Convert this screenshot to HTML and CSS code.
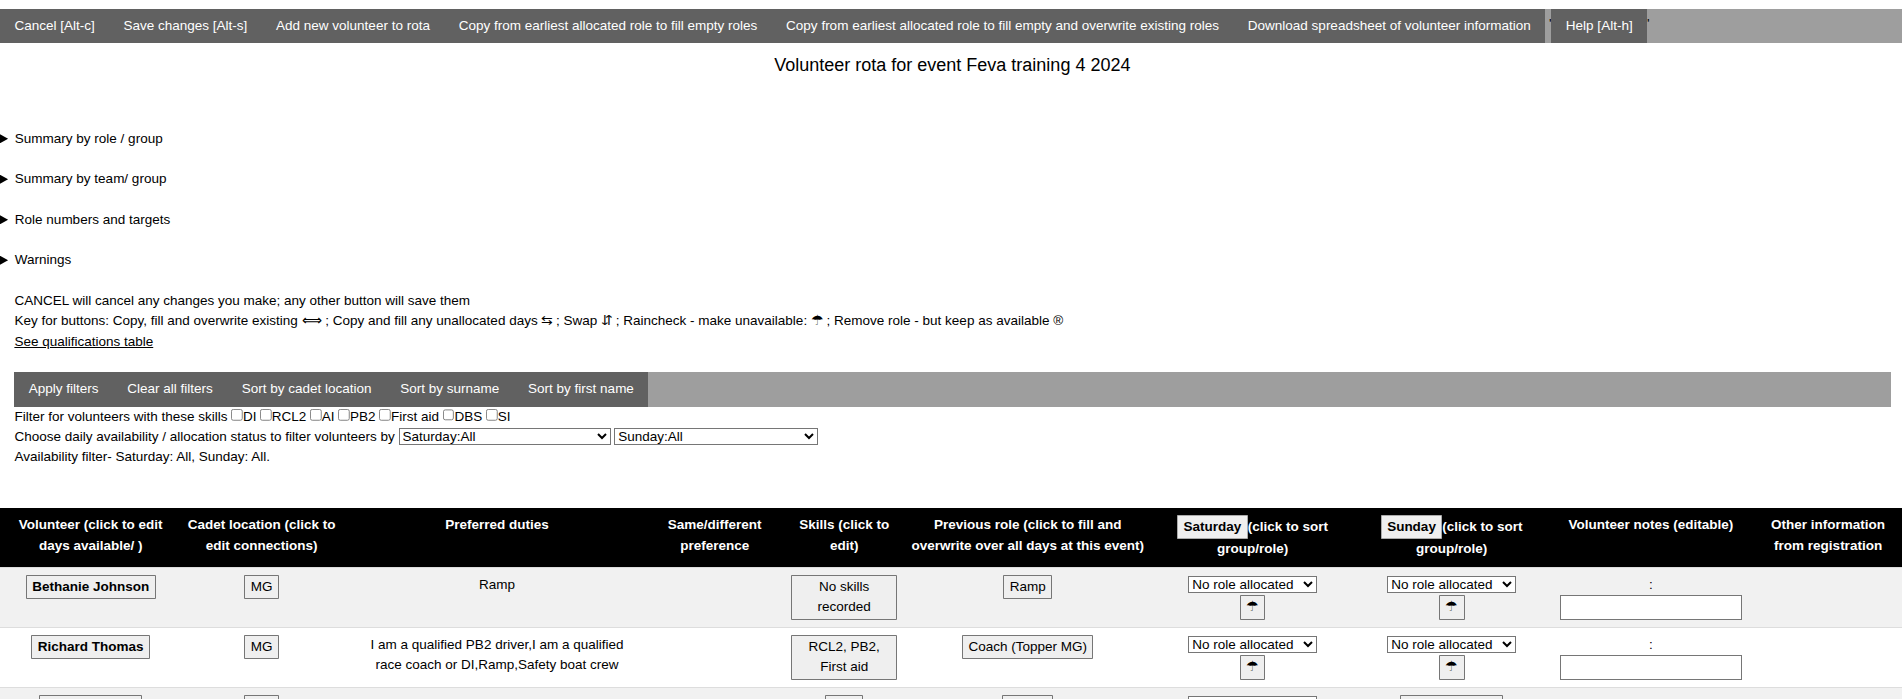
FILE: index.html
```html
<!DOCTYPE html>
<html lang="en">
<head>
<meta charset="utf-8">
<title>Volunteer rota</title>
<link rel="stylesheet" href="styles.css">
</head>
<body>
<form class="page">
<div class="bar top"><button type="button" class="bar-item">Cancel [Alt-c]</button><button type="button" class="bar-item">Save changes [Alt-s]</button><button type="button" class="bar-item">Add new volunteer to rota</button><button type="button" class="bar-item">Copy from earliest allocated role to fill empty roles</button><button type="button" class="bar-item">Copy from earliest allocated role to fill empty and overwrite existing roles</button><button type="button" class="bar-item">Download spreadsheet of volunteer information</button><span class="quote"> '</span><button type="button" class="bar-item">Help [Alt-h]</button><span class="quote">'</span></div>
<h4 class="title">Volunteer rota for event Feva training 4 2024</h4>
<div class="content">
<details><summary>Summary by role / group</summary></details>
<details><summary>Summary by team/ group</summary></details>
<details><summary>Role numbers and targets</summary></details>
<details><summary>Warnings</summary></details>
<div>CANCEL will cancel any changes you make; any other button will save them</div>
<div>Key for buttons: Copy, fill and overwrite existing ⟺ ; Copy and fill any unallocated days <span class="symbol">⇆</span> ; Swap <span class="symbol">⇵</span> ; Raincheck - make unavailable: <span class="symbol">☂</span> ; Remove role - but keep as available ®</div>
<div class="link-line"><a href="#">See qualifications table</a></div>
<div class="bar filters"><button type="button" class="bar-item">Apply filters</button><button type="button" class="bar-item">Clear all filters</button><button type="button" class="bar-item">Sort by cadet location</button><button type="button" class="bar-item">Sort by surname</button><button type="button" class="bar-item">Sort by first name</button></div>
<div>Filter for volunteers with these skills <input type="checkbox">DI <input type="checkbox">RCL2 <input type="checkbox">AI <input type="checkbox">PB2 <input type="checkbox">First aid <input type="checkbox">DBS <input type="checkbox">SI</div>
<div>Choose daily availability / allocation status to filter volunteers by <select class="sat-filter"><option>Saturday:All</option></select> <select class="sun-filter"><option>Sunday:All</option></select></div>
<div>Availability filter- Saturday: All, Sunday: All.</div>
</div>
<table class="rota">
<colgroup><col class="c-name"><col class="c-cadet"><col class="c-duties"><col class="c-same"><col class="c-skills"><col class="c-prev"><col class="c-sat"><col class="c-sun"><col class="c-notes"><col></colgroup>
<thead>
<tr><th>Volunteer (click to edit days available/ )</th><th>Cadet location (click to edit connections)</th><th>Preferred duties</th><th>Same/different preference</th><th>Skills (click to edit)</th><th>Previous role (click to fill and overwrite over all days at this event)</th><th><button type="button"><b>Saturday</b></button>(click to sort group/role)</th><th><button type="button"><b>Sunday</b></button>(click to sort group/role)</th><th>Volunteer notes (editable)</th><th>Other information from registration</th></tr>
</thead>
<tbody>
<tr><td><button type="button"><b>Bethanie Johnson</b></button></td><td><button type="button">MG</button></td><td>Ramp</td><td></td><td><button type="button">No skills recorded</button></td><td><button type="button">Ramp</button></td><td><select class="role"><option>No role allocated</option></select><br><button type="button">☂</button></td><td><select class="role"><option>No role allocated</option></select><br><button type="button">☂</button></td><td>:<br><input type="text" class="note"></td><td></td></tr>
<tr><td><button type="button"><b>Richard Thomas</b></button></td><td><button type="button">MG</button></td><td>I am a qualified PB2 driver,I am a qualified race coach or DI,Ramp,Safety boat crew</td><td></td><td><button type="button">RCL2, PB2, First aid</button></td><td><button type="button">Coach (Topper MG)</button></td><td><select class="role"><option>No role allocated</option></select><br><button type="button">☂</button></td><td><select class="role"><option>No role allocated</option></select><br><button type="button">☂</button></td><td>:<br><input type="text" class="note"></td><td></td></tr>
<tr><td><button type="button" class="wide">&nbsp;</button></td><td><button type="button" class="small">&nbsp;</button></td><td></td><td></td><td><button type="button" class="narrow">&nbsp;</button></td><td><button type="button" class="medium">&nbsp;</button></td><td><select class="role"><option></option></select></td><td><button type="button" class="wide">&nbsp;</button></td><td></td><td></td></tr>
</tbody>
</table>
</form>
</body>
</html>
```
FILE: styles.css
```css
*, *::before, *::after { box-sizing: border-box; }
html { overflow: hidden; }
body { zoom: 0.9; margin: 0; height: 776.6px; overflow: hidden; font: 15px/1.5 "Liberation Sans", Arial, sans-serif; color: #000; background: #fff; }
.page { height: 776.6px; padding-top: 10px; overflow: hidden; }
button, input, select { font: inherit; margin: 0; }
button { border: 1px solid #767676; border-radius: 1px; padding: 1px 6px; color: #000; background: #efefef; }
input[type="checkbox"] { padding: 0; }

.bar { display: flex; width: 100%; background: #9e9e9e; }
.top { height: 38px; }
.bar-item { padding: 8px 16px; border: none; border-radius: 0; color: #fff; background: #616161; white-space: nowrap; }
.quote { white-space: pre; padding-top: 5px; }

.title { margin: 10px 0 55px 3px; font-size: 20px; font-weight: 400; text-align: center; }
.content { padding: 0 12px 0 16px; margin-bottom: 44.5px; }
details { margin-bottom: 22.5px; }
summary { display: flex; align-items: center; margin-left: -16px; }
summary::before { content: ""; flex: none; width: 9px; height: 10px; margin-right: 7.5px; background: #000; clip-path: polygon(0 0, 100% 50%, 0 100%); }
a { color: inherit; }
.symbol { letter-spacing: -1.2px; }
.link-line { margin-top: 1px; }
.filters { height: 39px; margin-top: 21.5px; }
.sat-filter { width: 235.5px; }
.sun-filter { width: 226.5px; }

.rota { width: 100%; table-layout: fixed; border-collapse: collapse; }
.rota tr { border-bottom: 1px solid #ddd; }
.rota th, .rota td { padding: 8px; text-align: center; vertical-align: top; }
.rota th { line-height: 23.3px; padding-bottom: 8.1px; }
.rota th button { line-height: 22.5px; border-color: #aaa; }
.rota th:last-child { padding-left: 10px; }
.rota tbody tr { height: 66.7px; }
.rota th:first-child, .rota td:first-child { padding-left: 16px; }
.rota thead { color: #fff; background: #000; }
.rota tbody tr:nth-child(odd) { background: #f1f1f1; }
.c-name { width: 193.6px; }
.c-cadet { width: 194px; }
.c-duties { width: 329.3px; }
.c-same { width: 154.5px; }
.c-skills { width: 133.3px; }
.c-prev { width: 274.4px; }
.c-sat { width: 225.3px; }
.c-sun { width: 217.2px; }
.c-notes { width: 225.6px; }
.role { width: 143px; }
.note { width: 202px; }
.wide { width: 114px; }
.small { width: 39px; }
.medium { width: 57px; }
.narrow { width: 42px; }
```
